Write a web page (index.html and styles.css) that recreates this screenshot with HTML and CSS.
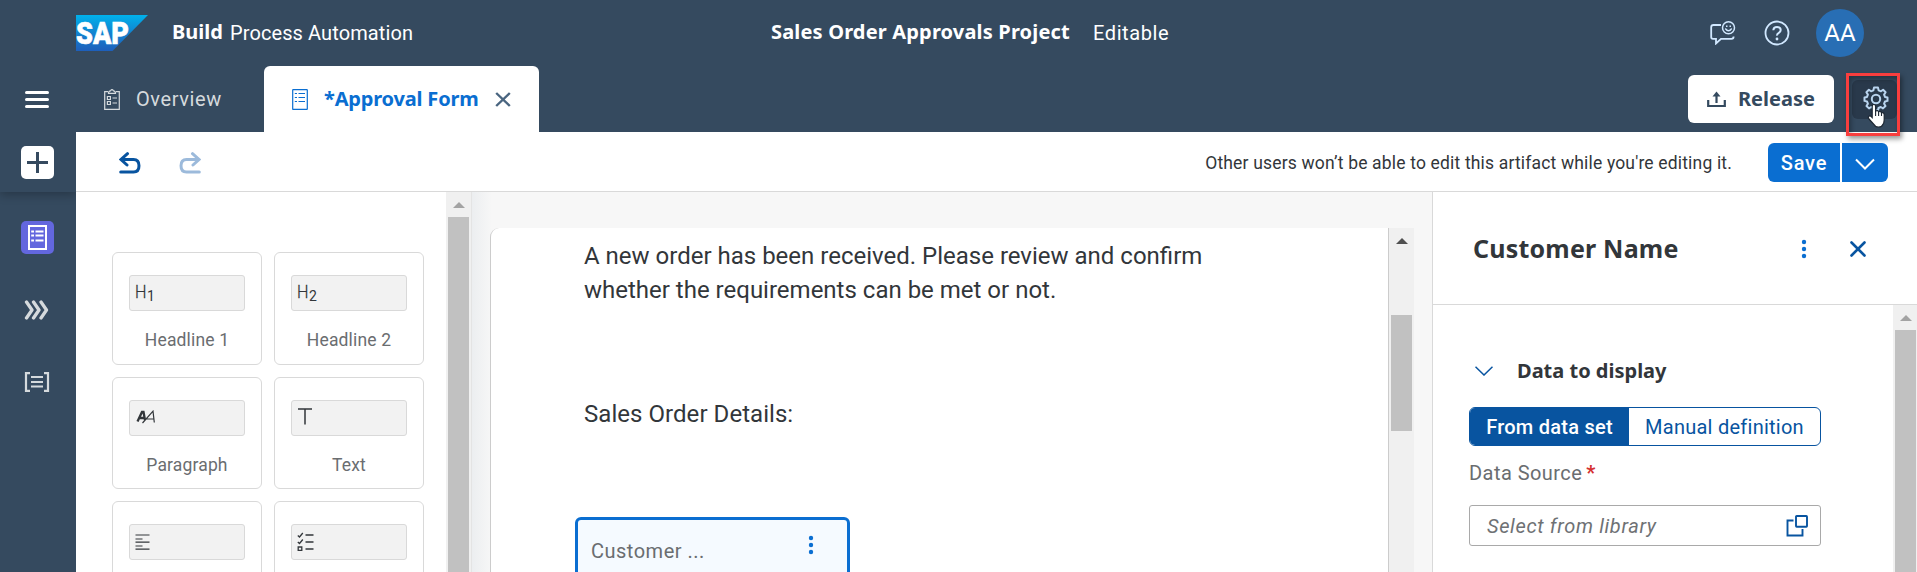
FILE: index.html
```html
<!DOCTYPE html>
<html lang="en">
<head>
<meta charset="utf-8">
<title>Sales Order Approvals Project</title>
<link rel="stylesheet" href="styles.css">
</head>
<body>
<div class="app">
  <header class="shell">
    <svg class="logo" width="72" height="36" viewBox="0 0 72 36">
      <defs><linearGradient id="lg" x1="0" y1="0" x2="0" y2="1"><stop offset="0" stop-color="#00b1eb"/><stop offset=".5" stop-color="#1283d0"/><stop offset="1" stop-color="#1e5fbb"/></linearGradient></defs>
      <path d="M0 0H72L36.500 36H0Z" fill="url(#lg)"/>
      <text class="logo-text" x="0" y="28.500" textLength="53" lengthAdjust="spacingAndGlyphs">SAP</text>
    </svg>
    <div class="product"><b class="build">Build</b><span class="process">Process Automation</span></div>
    <div class="project"><b class="project-name">Sales Order Approvals Project</b><span class="editable">Editable</span></div>
    <div class="shell-actions">
      <svg width="26" height="24" viewBox="0 0 26 24" fill="none" stroke="#d1e8ff" stroke-width="1.800">
        <path d="M11 4H3.500Q1.200 4 1.200 6.300V16Q1.200 17.800 3 17.800H6V22.500L11 17.800H21.500Q23.600 17.800 23.600 15.500"/>
        <circle cx="18.500" cy="6.800" r="6" stroke-width="1.500"/><path d="M15.300 7.500Q18.500 12 21.700 7.500" stroke-width="1.300"/><path d="M16 5.200H17.500M19.500 5.200H21" stroke-width="1.600"/>
      </svg>
      <svg width="26" height="26" viewBox="0 0 26 26" fill="none" stroke="#d1e8ff" stroke-width="1.800">
        <circle cx="13" cy="13" r="11.500"/><path d="M9.300 10.300Q9.500 7 13 7T16.700 10Q16.700 11.800 14.800 12.900T13 15.600" stroke-width="2"/><circle cx="13" cy="19" r="1.400" fill="#d1e8ff" stroke="none"/>
      </svg>
      <div class="avatar">AA</div>
    </div>
  </header>

  <div class="tabbar">
    <svg class="menu" width="24" height="17" viewBox="0 0 24 17" stroke="#fff" stroke-width="3" stroke-linecap="round"><path d="M1.500 1.500H22.500M1.500 8.500H22.500M1.500 15.500H22.500"/></svg>
    <div class="tab">
      <svg width="16" height="21" viewBox="0 0 16 21" fill="none" stroke="#d5dadd" stroke-width="1.200">
        <path d="M4 2.600H.7V20.400H15.300V2.600H12"/><path d="M4.500 4.300Q4.500 2 6.500 1.800Q8 -.4 9.500 1.800Q11.500 2 11.500 4.300Z"/><path d="M3.400 7.500H6.400V10.500H3.400ZM3.400 12.500H6.400V15.500H3.400ZM8.500 9H13M8.500 14H13"/>
      </svg>
      <span class="overview">Overview</span>
    </div>
    <div class="tab tab-active">
      <svg width="16" height="21" viewBox="0 0 16 21" fill="none" stroke="#0a6ed1" stroke-width="1.200"><rect x=".7" y=".6" width="14.600" height="19.800" rx=".5"/><path d="M2.800 4.500H5M6.500 4.500H13M2.800 8.500H5M6.500 8.500H13M2.800 12.500H5M6.500 12.500H13"/></svg>
      <b class="approval">*Approval Form</b>
      <svg class="tab-close" width="16" height="15" viewBox="0 0 16 15" stroke="#4a6580" stroke-width="2.400"><path d="M1.200 1L14.800 14M14.800 1L1.200 14"/></svg>
    </div>
    <div class="tab-actions">
      <div class="release">
        <svg width="19" height="17" viewBox="0 0 19 17" fill="none" stroke="#354a5f" stroke-width="2.200"><path d="M1.200 9V15H17.800V9"/><path d="M9.500 12V3"/><path d="M5.500 5.500L9.500.5L13.500 5.500Z" fill="#354a5f" stroke="none"/></svg>
        <b class="release-label">Release</b>
      </div>
      <div class="gear">
        <svg width="26" height="26" viewBox="-13 -13 26 26" fill="none" stroke="#b9d4ee" stroke-width="2" stroke-linejoin="round">
          <path d="M-2 -11.400H2L2.600 -8.700L5 -7.700L7.100 -9.200L9.600 -6.700L8.100 -4.400L9 -2.100L11.500 -1.600V1.900L9 2.500L8.100 4.700L9.500 7L7 9.400L4.800 8L2.500 9L2 11.500H-2L-2.500 9L-4.800 8L-7 9.400L-9.500 7L-8.100 4.700L-9 2.500L-11.500 1.900V-1.600L-9 -2.100L-8.100 -4.400L-9.600 -6.700L-7.100 -9.200L-5 -7.700L-2.600 -8.700Z"/><circle r="4.200"/>
        </svg>
        <div class="callout"></div>
        <svg class="cursor" width="20" height="26" viewBox="0 0 20 26"><path d="M5.200 14.500V3.500Q5.200 1.500 6.900 1.500T8.600 3.500V8Q11 7 11.600 8.800Q14 7.900 14.500 9.800Q17.200 9.200 17.200 12V17Q17.200 20 15.500 22Q15 24 11.500 24T7.500 22L2 16Q.6 14 2 13.200T5.200 14.500Z" fill="#fff" stroke="#1d2733" stroke-width="1.200"/><path d="M8.600 8V13M11.600 9V13M14.500 10V13" stroke="#1d2733" stroke-width="1.100"/></svg>
      </div>
    </div>
  </div>

  <div class="body">
    <nav class="rail">
      <div class="rail-top"><div class="add"><svg width="21" height="21" viewBox="0 0 21 21" stroke="#354a5f" stroke-width="3"><path d="M10.500 0V21M0 10.500H21"/></svg></div></div>
      <div class="rail-items">
        <div class="rail-form"><svg width="19" height="25" viewBox="0 0 19 25" fill="none" stroke="#fff" stroke-width="2"><rect x="1" y="1" width="17" height="23"/><path d="M3.200 6.500H6M7.500 6.500H15.500M3.200 10.500H6M7.500 10.500H15.500M3.200 15.500H6M7.500 15.500H15.500"/></svg></div>
        <svg class="rail-chev" width="26" height="20" viewBox="0 0 26 20" fill="none" stroke="#d5dadd" stroke-width="3.300" stroke-linecap="round" stroke-linejoin="round"><path d="M2.500 2L8 10L2.500 18M9.500 2L15 10L9.500 18M17 2L22.500 10L17 18"/></svg>
        <svg class="rail-list" width="26" height="20" viewBox="0 0 26 20" fill="none" stroke="#d5dadd" stroke-width="2.200"><path d="M6 1.200H2V18.800H6M20 1.200H24V18.800H20M7 5H19M7 10H19M7 14.500H19"/></svg>
      </div>
    </nav>
    <div class="work">
      <div class="toolbar">
        <svg width="22" height="22" viewBox="0 0 22 22" fill="none" stroke="#0854a0" stroke-width="3" stroke-linecap="round"><path d="M8.500 1.700L2 7.500L8 13M2.500 7.500H14.500Q20 7.500 20 13.700T14.500 20H1.700"/></svg>
        <svg class="redo" width="22" height="22" viewBox="0 0 22 22" fill="none" stroke="#9cbadb" stroke-width="3" stroke-linecap="round"><path d="M13.500 1.700L20 7.500L14 13M19.500 7.500H7.500Q2 7.500 2 13.700T7.500 20H20.300"/></svg>
        <span class="notice">Other users won’t be able to edit this artifact while you're editing it.</span>
        <div class="save">Save</div>
        <div class="save-more"><svg width="20" height="12" viewBox="0 0 20 12" fill="none" stroke="#fff" stroke-width="2"><path d="M1 1.500L10 10.500L19 1.500"/></svg></div>
      </div>
      <div class="panes">
        <aside class="palette">
          <div class="cards">
            <div class="card"><div class="sample"><span class="h">H</span><span class="sub">1</span></div><span class="label">Headline 1</span></div>
            <div class="card"><div class="sample"><span class="h">H</span><span class="sub">2</span></div><span class="label">Headline 2</span></div>
            <div class="card"><div class="sample"><svg class="aa" width="20" height="14" viewBox="0 0 20 14" fill="none" stroke="#32363a"><path d="M1.500 11.500L6 2H7.500L9 10M3.500 8H8" stroke-width="2.300"/><path d="M6.500 13L17 1.200L18.300 12.500M10.500 9H18" stroke-width="1.200"/></svg></div><span class="label">Paragraph</span></div>
            <div class="card"><div class="sample"><svg class="tt" width="14" height="17" viewBox="0 0 14 17" stroke="#32363a" stroke-width="1.500"><path d="M0 1H14M7 1V16.500"/></svg></div><span class="label">Text</span></div>
            <div class="card"><div class="sample"><svg class="para" width="15" height="16" viewBox="0 0 15 16" stroke="#32363a" stroke-width="1.200"><path d="M.5 1H14.500M.5 5H7.500M.5 8.200H14.500M.5 12H7.500M.5 15.200H14.500"/></svg></div></div>
            <div class="card"><div class="sample"><svg class="check" width="17" height="19" viewBox="0 0 17 19" fill="none" stroke="#32363a" stroke-width="1.300"><path d="M8.500 3H16.500M8.500 10H16.500M8.500 17H16.500M.8 3.500L2.500 5L5.800 1M.8 10L2.500 11.500L5.800 7.500M1.200 15H4.800V18.300H1.200Z"/></svg></div></div>
          </div>
          <div class="scroll"><i class="arrow"></i><i class="thumb"></i></div>
        </aside>
        <main class="canvas">
          <div class="form">
            <p class="copy">A new order has been received. Please review and confirm<br>whether the requirements can be met or not.</p>
            <p class="copy details">Sales Order Details:</p>
            <div class="field"><span class="field-label">Customer ...</span><svg width="6" height="20" viewBox="0 0 6 20" fill="#0a6ed1"><circle cx="3" cy="3" r="2.200"/><circle cx="3" cy="10" r="2.200"/><circle cx="3" cy="17" r="2.200"/></svg></div>
          </div>
          <div class="scroll dark"><i class="arrow"></i><i class="thumb"></i></div>
        </main>
        <aside class="props">
          <div class="props-head"><b class="title">Customer Name</b>
            <svg class="more" width="6" height="20" viewBox="0 0 6 20" fill="#0a6ed1"><circle cx="3" cy="3" r="2.200"/><circle cx="3" cy="10" r="2.200"/><circle cx="3" cy="17" r="2.200"/></svg>
            <svg width="16" height="16" viewBox="0 0 16 16" stroke="#0854a0" stroke-width="2.600" stroke-linecap="round"><path d="M1.500 1.500L14.500 14.500M14.500 1.500L1.500 14.500"/></svg>
          </div>
          <div class="props-body">
            <div class="settings">
              <div class="section"><svg width="18" height="10" viewBox="0 0 18 10" fill="none" stroke="#0854a0" stroke-width="1.500"><path d="M.5.7L9 9L17.500.7"/></svg><b class="section-title">Data to display</b></div>
              <div class="segmented"><div class="seg on">From data set</div><div class="seg">Manual definition</div></div>
              <div class="source"><span class="source-label">Data Source</span><span class="req">*</span></div>
              <div class="input"><span class="placeholder">Select from library</span><svg width="22" height="22" viewBox="0 0 22 22" fill="none" stroke="#0854a0" stroke-width="1.900"><rect x="10" y="1" width="11" height="10.800" rx=".7"/><path d="M7.500 5.500H1.500V20.500H16.500V14"/></svg></div>
            </div>
            <div class="scroll"><i class="arrow"></i><i class="thumb"></i></div>
          </div>
        </aside>
      </div>
    </div>
  </div>
</div>
</body>
</html>
```
FILE: styles.css
```css
* { box-sizing: border-box; }
body { margin: 0; font-family: Roboto, "Liberation Sans", sans-serif; font-size: 20px; color: #32363a; background: #fff; white-space: nowrap; }
svg { display: block; flex: none; }
b { font-family: "Noto Sans", sans-serif; font-weight: 700; line-height: 24px; margin-top: -1px; }
.app { height: 572px; overflow: hidden; display: flex; flex-direction: column; }

/* Shell header */
.shell { height: 66px; flex: none; background: #354a5f; color: #fff; display: grid; grid-template-columns: 172px 599px 1fr auto; align-items: center; padding-right: 53px; }
.logo { margin-left: 76px; }
.logo-text { font: 900 31px Roboto, sans-serif; fill: #fff; stroke: #fff; stroke-width: .6; }
.product { display: grid; grid-template-columns: 58px auto; justify-content: start; }
.process { letter-spacing: .1px; }
.project { display: grid; grid-template-columns: 322px auto; justify-content: start; }
.project-name { letter-spacing: .17px; }
.editable { letter-spacing: .6px; }
.shell-actions { display: flex; align-items: center; gap: 28px; }
.avatar { width: 48px; height: 48px; border-radius: 50%; background: #286eb4; font-size: 24px; display: flex; align-items: center; justify-content: center; margin-left: -2px; }

/* Tabs */
.tabbar { height: 66px; flex: none; background: #354a5f; display: flex; align-items: center; }
.menu { margin: 0 27px 0 25px; }
.tab { width: 188px; height: 66px; padding-left: 28px; display: flex; align-items: center; color: #d5dadd; gap: 16px; }
.overview { letter-spacing: .6px; }
.tab-active { width: 275px; background: #fff; color: #0a6ed1; border-radius: 6px 6px 0 0; }
.approval { letter-spacing: -.18px; }
.tab-close { margin-left: auto; margin-right: 28px; }
.tab-active { gap: 0; }
.tab-active b { margin-left: 16px; }
.tab-actions { margin-left: auto; display: flex; gap: 18px; align-items: center; margin-right: 20px; }
.release { width: 146px; height: 48px; border-radius: 6px; background: #fff; color: #354a5f; display: flex; align-items: center; padding-left: 19px; gap: 12px; }
.gear { position: relative; width: 45px; height: 39px; background: #29394b; border-radius: 6px; display: flex; align-items: center; padding-left: 11px; }
.callout { position: absolute; left: -6px; top: -7px; width: 54px; height: 63px; border: 3px solid #f93e3e; box-shadow: 2px 3px 5px rgba(0,0,0,.4), inset 2px 3px 5px rgba(0,0,0,.3); z-index: 2; }
.cursor { position: absolute; left: 15px; top: 23px; z-index: 3; }

/* Side rail and toolbar */
.body { flex: 1; min-height: 0; display: flex; }
.rail { width: 76px; flex: none; background: #354a5f; overflow: hidden; }
.rail-top { height: 60px; padding: 14px 0 0 21px; box-shadow: 0 3px 9px rgba(0,0,0,.25); }
.add, .rail-form { width: 33px; height: 33px; border-radius: 5px; background: #fff; display: flex; align-items: center; justify-content: center; }
.rail-items { padding: 29px 0 0 21px; }
.rail-form { background: #6367de; }
.rail-chev { margin: 46px 0 0 3px; }
.rail-list { margin: 52px 0 0 3px; }
.work { flex: 1; min-width: 0; display: flex; flex-direction: column; }
.toolbar { height: 60px; flex: none; border-bottom: 1px solid #d9d9d9; display: flex; align-items: center; padding: 2px 29px 0 43px; }
.redo { margin-left: 38px; }
.notice { margin-left: auto; margin-right: 36px; font-size: 17.5px; letter-spacing: .17px; }
.save { width: 72px; height: 39px; background: #0a6ed1; color: #fff; border-radius: 6px 0 0 6px; display: flex; align-items: center; justify-content: center; font-weight: 500; letter-spacing: .8px; }
.save-more { width: 46px; height: 39px; margin-left: 2px; background: #0a6ed1; border-radius: 0 6px 6px 0; display: flex; align-items: center; justify-content: center; padding-top: 3px; }

/* Component palette */
.panes { flex: 1; min-height: 0; display: flex; }
.palette { width: 396px; flex: none; display: flex; border-right: 1px solid #e4e4e4; }
.cards { width: 370px; padding: 60px 0 0 36px; display: grid; grid-template-columns: 150px 150px; grid-auto-rows: 112.500px; gap: 12px; align-content: start; }
.card { border: 1px solid #d9d9d9; border-radius: 6px; padding: 22px 16px 0; display: flex; flex-direction: column; align-items: center; }
.sample { align-self: stretch; height: 36px; flex: none; border: 1px solid #d9d9d9; border-radius: 3px; background: #f2f2f2; display: flex; padding-left: 5px; }
.h { font-size: 18px; font-weight: 300; line-height: 32px; width: 12px; -webkit-text-stroke: .3px #32363a; transform: scaleX(.9); transform-origin: 0 0; }
.sub { font-size: 14px; line-height: 40px; }
.aa { margin: 9px 0 0 1px; }
.tt { margin: 7px 0 0 1px; }
.para { margin-top: 9px; }
.check { margin-top: 7px; }
.label { font-size: 17.5px; letter-spacing: .15px; color: #6a6d70; margin-top: 19px; line-height: 20px; }

.scroll { width: 25px; flex: none; background: #f0f0f0; padding: 10px 2px 0; display: flex; flex-direction: column; align-items: center; gap: 9px; overflow: hidden; }
.arrow { flex: none; width: 0; height: 0; border: 6px solid transparent; border-top: 0; border-bottom-color: #a3a3a3; }
.thumb { width: 21px; flex: 1; background: #c1c1c1; }
.dark .arrow { border-bottom-color: #505050; }
.dark .thumb { flex: none; height: 116px; margin-top: 62px; }

/* Form canvas */
.canvas { width: 960px; flex: none; background: linear-gradient(90deg, #eceef0, #f7f7f7 20px); padding: 36px 18px 0; display: flex; }
.form { width: 899px; flex: none; background: #fff; border: 1px solid #ccc; border-width: 0 1px; border-top-left-radius: 9px; padding: 11px 0 0 84px; }
.copy { margin: 0 0 0 9px; font-size: 24px; line-height: 34px; }
.details { margin-top: 90px; letter-spacing: .05px; }
.field { width: 275px; height: 80px; margin-top: 86px; border: 3px solid #0a6ed1; border-radius: 6px; background: #f5faff; color: #6a6d70; display: flex; justify-content: space-between; padding: 15px 33px 0 13px; }
.field-label { line-height: 24px; margin-top: 4px; letter-spacing: .5px; }

/* Properties panel */
.props { flex: 1; min-width: 0; border-left: 1px solid #d9d9d9; display: flex; flex-direction: column; }
.props-head { height: 113px; flex: none; border-bottom: 1px solid #d9d9d9; display: flex; align-items: center; padding: 2px 51px 0 40px; }
.title { font-size: 25px; margin-top: -2px; letter-spacing: .2px; }
.more { margin: 0 43px 0 auto; }
.props-body { flex: 1; min-height: 0; display: flex; }
.settings { width: 460px; flex: none; padding: 51px 0 0 36px; }
.section { display: flex; align-items: center; gap: 24px; height: 30px; padding-left: 6px; }
.segmented { width: 352px; height: 39px; margin-top: 21px; border: 1px solid #0854a0; border-radius: 6px; overflow: hidden; display: grid; grid-template-columns: 159px 1fr; color: #0854a0; }
.seg { display: flex; align-items: center; justify-content: center; letter-spacing: .25px; }
.on { background: #0854a0; color: #fff; font-weight: 500; }
.source { height: 30px; margin-top: 12px; color: #6a6d70; display: flex; gap: 4px; line-height: 30px; }
.source-label { letter-spacing: .45px; }
.req { color: #d53030; font-weight: 700; font-size: 20px; }
.input { width: 352px; height: 41px; margin-top: 17px; border: 1px solid #a9a9a9; border-radius: 3px; display: flex; align-items: center; justify-content: space-between; padding: 0 12px 0 17px; color: #6e7174; font-style: italic; }
.placeholder { letter-spacing: .65px; }
```
